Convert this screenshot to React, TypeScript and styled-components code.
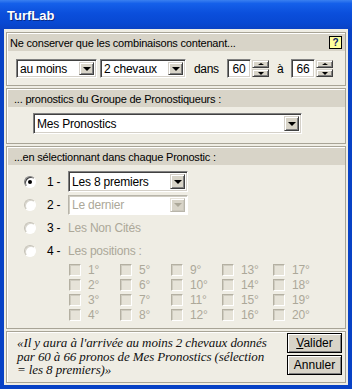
import React from 'react';
import styled, { createGlobalStyle } from 'styled-components';

const Global = createGlobalStyle`
  html, body { margin: 0; padding: 0; background: #0842c6; }
  body { font-family: "Liberation Sans", Arial, sans-serif; }
  * { box-sizing: border-box; }
`;

const Win = styled.div`
  width: 352px;
  height: 389px;
  display: flex;
  flex-direction: column;
  background: #0842c6;
`;

const TitleBar = styled.div`
  height: 29px;
  flex: none;
  display: flex;
  align-items: center;
  padding-left: 7px;
  padding-top: 2px;
  background: linear-gradient(180deg, #3a80f0 0%, #1560ea 12%, #0b4fdc 45%, #0848d2 80%, #0a42c4 100%);
`;

const TitleText = styled.span`
  font-family: "Liberation Sans", Arial, sans-serif;
  font-weight: bold;
  font-size: 13px;
  color: #fff;
  text-shadow: 1px 1px 0 #0a2a86;
`;

const Client = styled.div`
  flex: 1;
  margin: 0 4px 4px 4px;
  background: #efede4;
  padding: 3px 2px 2px 2px;
  display: flex;
  flex-direction: column;
  gap: 2px;
  font-size: 11px;
  letter-spacing: -0.2px;
  color: #000;
`;

const Box = styled.div<{ $h: number }>`
  height: ${p => p.$h}px;
  flex: none;
  border: 1px solid #a8a496;
  box-shadow: inset 1px 1px 0 #fff;
  display: flex;
  flex-direction: column;
`;

const Header = styled.div<{ $pl: number }>`
  height: 17px;
  margin: 1px 0 0 1px;
  background: #d8d4c8;
  display: flex;
  align-items: center;
  justify-content: space-between;
  padding-left: ${p => p.$pl}px;
  padding-right: 3px;
  white-space: nowrap;
`;

const HelpBtn = styled.div`
  width: 13px;
  height: 13px;
  border: 1px solid #000;
  background: #ffff9c;
  color: #0a1a6a;
  font-weight: bold;
  font-size: 10px;
  line-height: 11px;
  text-align: center;
  letter-spacing: 0;
`;

const CtrlRow = styled.div`
  display: flex;
  align-items: center;
  height: 19px;
  margin-top: 8px;
  padding-left: 9px;
`;

const SelectBox = styled.div<{ $w: number; $h: number; $ml: number; $disabled?: boolean }>`
  width: ${p => p.$w}px;
  height: ${p => p.$h}px;
  margin-left: ${p => p.$ml}px;
  flex: none;
  display: flex;
  align-items: stretch;
  background: #fff;
  border: 1px solid;
  border-color: ${p => (p.$disabled ? '#b8b5aa #fff #fff #b8b5aa' : '#808080 #fff #fff #808080')};
  box-shadow: ${p => (p.$disabled ? 'inset 1px 1px 0 #d0cdc2' : 'inset 1px 1px 0 #404040, inset -1px -1px 0 #d4d0c8')};
  padding: 2px 2px 2px 3px;
`;

const SelectText = styled.span<{ $disabled?: boolean }>`
  flex: 1;
  display: flex;
  align-items: center;
  font-size: 12px;
  color: ${p => (p.$disabled ? '#aca899' : '#000')};
  white-space: nowrap;
  overflow: hidden;
`;

const ArrowBtn = styled.div<{ $disabled?: boolean }>`
  width: 15px;
  flex: none;
  display: flex;
  align-items: center;
  justify-content: center;
  background: #d8d4c8;
  border: 1px solid;
  border-color: ${p => (p.$disabled ? '#e6e3da #b8b5aa #b8b5aa #e6e3da' : '#d4d0c8 #404040 #404040 #d4d0c8')};
  box-shadow: inset 1px 1px 0 #fff, inset -1px -1px 0 ${p => (p.$disabled ? '#ccc9be' : '#808080')};
`;

const Tri = styled.div<{ $up?: boolean; $disabled?: boolean; $size?: number }>`
  width: 0;
  height: 0;
  border-left: ${p => p.$size ?? 4}px solid transparent;
  border-right: ${p => p.$size ?? 4}px solid transparent;
  ${p =>
    p.$up
      ? `border-bottom: ${(p.$size ?? 4) - 1}px solid ${p.$disabled ? '#aca899' : '#000'};`
      : `border-top: ${p.$size ?? 4}px solid ${p.$disabled ? '#aca899' : '#000'};`}
`;

const Select: React.FC<{ w: number; h: number; ml?: number; disabled?: boolean; children: React.ReactNode }> = ({
  w,
  h,
  ml = 0,
  disabled,
  children,
}) => (
  <SelectBox $w={w} $h={h} $ml={ml} $disabled={disabled}>
    <SelectText $disabled={disabled}>{children}</SelectText>
    <ArrowBtn $disabled={disabled}>
      <Tri $disabled={disabled} />
    </ArrowBtn>
  </SelectBox>
);

const Label = styled.div<{ $w: number }>`
  width: ${p => p.$w}px;
  flex: none;
  padding-left: 8px;
  font-size: 12px;
  letter-spacing: -0.3px;
`;

const NumInput = styled.div`
  width: 24px;
  height: 19px;
  flex: none;
  background: #fff;
  border: 1px solid;
  border-color: #808080 #fff #fff #808080;
  box-shadow: inset 1px 1px 0 #404040, inset -1px -1px 0 #d4d0c8;
  display: flex;
  align-items: center;
  justify-content: center;
  font-size: 12px;
`;

const SpinCol = styled.div`
  width: 17px;
  height: 17px;
  margin-left: 1px;
  flex: none;
  display: flex;
  flex-direction: column;
  gap: 1px;
`;

const SpinBtn = styled.div`
  flex: 1;
  display: flex;
  align-items: center;
  justify-content: center;
  background: #d8d4c8;
  border: 1px solid;
  border-color: #d4d0c8 #404040 #404040 #d4d0c8;
  box-shadow: inset 1px 1px 0 #fff, inset -1px -1px 0 #808080;
`;

const Spin: React.FC<{ value: string }> = ({ value }) => (
  <>
    <NumInput>{value}</NumInput>
    <SpinCol>
      <SpinBtn>
        <Tri $up $size={3} />
      </SpinBtn>
      <SpinBtn>
        <Tri $size={3} />
      </SpinBtn>
    </SpinCol>
  </>
);

const PickRow = styled.div`
  margin-top: 6px;
  padding-left: 26px;
  display: flex;
`;

const Body3 = styled.div`
  margin-top: 6px;
  display: flex;
  flex-direction: column;
`;

const OptRow = styled.div<{ $h: number; $mb: number }>`
  height: ${p => p.$h}px;
  margin-bottom: ${p => p.$mb}px;
  display: flex;
  align-items: center;
  padding-left: 17px;
`;

const Radio = styled.div<{ $checked?: boolean; $light?: boolean }>`
  width: 12px;
  height: 12px;
  flex: none;
  border-radius: 50%;
  background: #fff;
  border: 1px solid;
  border-color: ${p => (p.$light ? '#c4c1b6 #fff #fff #c4c1b6' : '#808080 #fff #fff #808080')};
  box-shadow: inset 1px 1px 0 ${p => (p.$light ? '#d8d6cd' : '#404040')};
  display: flex;
  align-items: center;
  justify-content: center;
  &::after {
    content: '';
    display: ${p => (p.$checked ? 'block' : 'none')};
    width: 4px;
    height: 4px;
    border-radius: 50%;
    background: #000;
  }
`;

const Num = styled.div`
  width: 21px;
  margin-left: 11px;
  flex: none;
  font-size: 12px;
  white-space: nowrap;
`;

const OptText = styled.div`
  color: #aca899;
  font-size: 12px;
  white-space: nowrap;
`;

const Grid = styled.div`
  display: grid;
  grid-template-columns: repeat(5, 51px);
  grid-template-rows: repeat(4, 15px);
  grid-auto-flow: column;
  padding-left: 62px;
`;

const Cell = styled.div`
  display: flex;
  align-items: center;
`;

const Check = styled.div`
  width: 12px;
  height: 12px;
  flex: none;
  background: #e6e3d8;
  border: 1px solid;
  border-color: #b4b0a2 #fff #fff #b4b0a2;
  box-shadow: inset 1px 1px 0 #cfccc0;
`;

const CheckLabel = styled.span`
  margin-left: 7px;
  color: #aca899;
  font-size: 12px;
`;

const Bottom = styled.div`
  flex: 1;
  display: flex;
  justify-content: space-between;
`;

const Summary = styled.div`
  padding: 4px 0 0 10px;
  font-family: "Liberation Serif", "Times New Roman", serif;
  font-style: italic;
  font-size: 13px;
  line-height: 13.5px;
  letter-spacing: -0.1px;
  color: #111;
  white-space: nowrap;
`;

const BtnCol = styled.div`
  margin: 1px 3px 0 0;
  display: flex;
  flex-direction: column;
  gap: 2px;
`;

const Button = styled.div`
  width: 55px;
  height: 20px;
  border: 1px solid #000;
  background: #d8d4c8;
  box-shadow: inset 1px 1px 0 #fff, inset -1px -1px 0 #808080;
  display: flex;
  align-items: center;
  justify-content: center;
  font-size: 12px;
  letter-spacing: 0;
  u { text-decoration: underline; }
`;

const positions = Array.from({ length: 20 }, (_, i) => `${i + 1}°`);

export default function App() {
  return (
    <>
      <Global />
      <Win>
        <TitleBar>
          <TitleText>TurfLab</TitleText>
        </TitleBar>
        <Client>
          <Box $h={54}>
            <Header $pl={2}>
              <span>Ne conserver que les combinaisons contenant...</span>
              <HelpBtn>?</HelpBtn>
            </Header>
            <CtrlRow>
              <Select w={81} h={19}>au moins</Select>
              <Select w={86} h={19} ml={3}>2 chevaux</Select>
              <Label $w={41}>dans</Label>
              <Spin value="60" />
              <Label $w={22}>à</Label>
              <Spin value="66" />
            </CtrlRow>
          </Box>
          <Box $h={56}>
            <Header $pl={6}>... pronostics du Groupe de Pronostiqueurs :</Header>
            <PickRow>
              <Select w={269} h={21}>Mes Pronostics</Select>
            </PickRow>
          </Box>
          <Box $h={183}>
            <Header $pl={6}>...en sélectionnant dans chaque Pronostic :</Header>
            <Body3>
              <OptRow $h={21} $mb={2}>
                <Radio $checked />
                <Num>1 -</Num>
                <Select w={120} h={21}>Les 8 premiers</Select>
              </OptRow>
              <OptRow $h={21} $mb={2}>
                <Radio $light />
                <Num>2 -</Num>
                <Select w={120} h={20} disabled>Le dernier</Select>
              </OptRow>
              <OptRow $h={22} $mb={1}>
                <Radio $light />
                <Num>3 -</Num>
                <OptText>Les Non Cités</OptText>
              </OptRow>
              <OptRow $h={21} $mb={1}>
                <Radio $light />
                <Num>4 -</Num>
                <OptText>Les positions :</OptText>
              </OptRow>
              <Grid>
                {positions.map(p => (
                  <Cell key={p}>
                    <Check />
                    <CheckLabel>{p}</CheckLabel>
                  </Cell>
                ))}
              </Grid>
            </Body3>
          </Box>
          <Box $h={52}>
            <Bottom>
              <Summary>
                «Il y aura à l'arrivée au moins 2 chevaux donnés
                <br />
                par 60 à 66 pronos de Mes Pronostics (sélection
                <br />= les 8 premiers)»
              </Summary>
              <BtnCol>
                <Button>
                  <span>
                    <u>V</u>alider
                  </span>
                </Button>
                <Button>Annuler</Button>
              </BtnCol>
            </Bottom>
          </Box>
        </Client>
      </Win>
    </>
  );
}
